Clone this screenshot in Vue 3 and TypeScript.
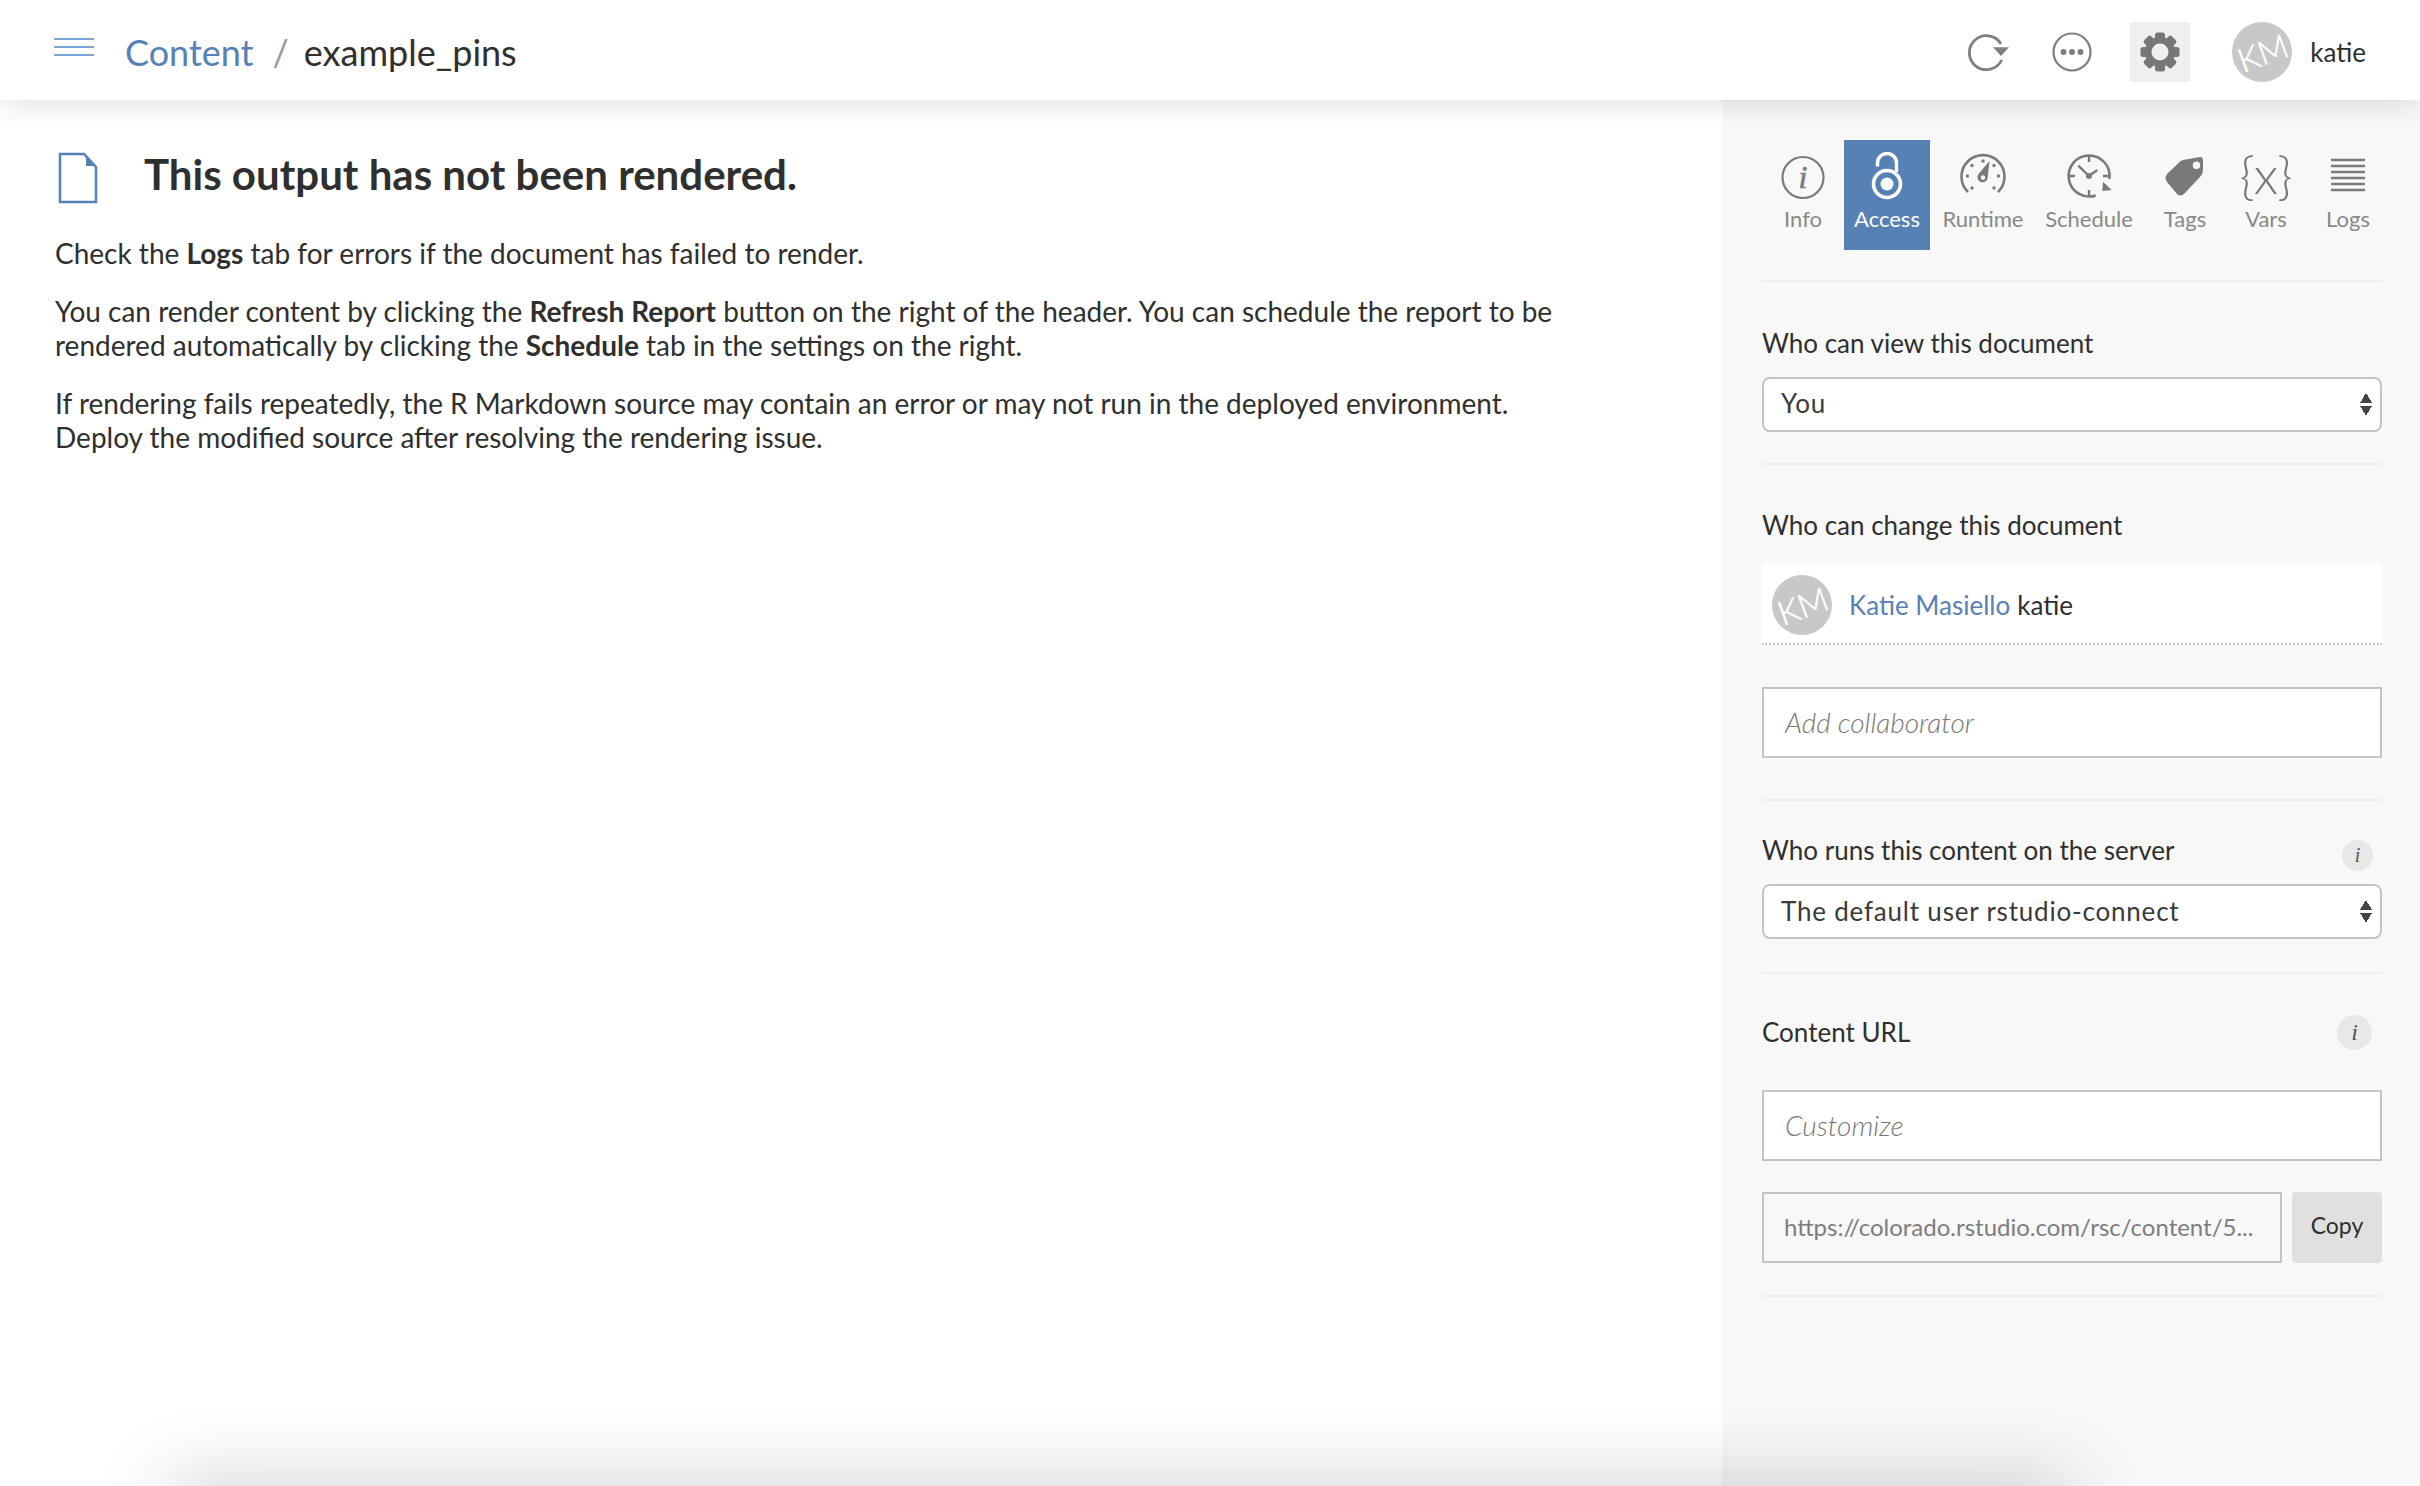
<template>
  <div class="page">
    <header class="topbar">
      <button class="menu-btn" aria-label="Menu"><span></span><span></span><span></span></button>
      <nav class="crumbs">
        <a class="crumb-link">Content</a>
        <span class="crumb-sep">/</span>
        <span class="crumb-current">example_pins</span>
      </nav>
      <div class="top-actions">
        <svg class="top-icon refresh" width="44" height="44" viewBox="0 0 44 44">
          <path d="M37.7 30A17 17 0 1 1 37 14" fill="none" stroke="#7f7f7f" stroke-width="2.8" />
          <path d="M29 17.300H45L37 26Z" fill="#7f7f7f" />
        </svg>
        <svg class="top-icon dots" width="44" height="44" viewBox="0 0 44 44">
          <circle cx="22" cy="22" r="18.500" fill="none" stroke="#7f7f7f" stroke-width="2.200" />
          <circle cx="13.500" cy="22" r="3" fill="#7f7f7f" />
          <circle cx="22" cy="22" r="3" fill="#7f7f7f" />
          <circle cx="30.500" cy="22" r="3" fill="#7f7f7f" />
        </svg>
        <div class="gear-box">
          <svg width="40" height="40" viewBox="0 0 40 40">
            <rect v-for="deg in [0, 45, 90, 135]" :key="deg" x="15" y="0.500" width="10" height="39" rx="2.500" fill="#777" :transform="`rotate(${deg} 20 20)`" />
            <circle cx="20" cy="20" r="15" fill="#777" />
            <circle cx="20" cy="20" r="8.500" fill="#efefef" />
          </svg>
        </div>
        <div class="avatar avatar-top"><span>KM</span></div>
        <span class="username">katie</span>
      </div>
    </header>

    <div class="body">
      <main class="main">
        <div class="title-row">
          <svg class="doc-icon" width="40" height="52" viewBox="0 0 40 52">
            <path d="M2 2H26L38 15V50H2Z" fill="#fff" stroke="#5781b5" stroke-width="2.500" />
            <path d="M28 3L37 14H28Z" fill="#5781b5" />
          </svg>
          <h1>This output has not been rendered.</h1>
        </div>
        <p>Check the <b>Logs</b> tab for errors if the document has failed to render.</p>
        <p>You can render content by clicking the <b>Refresh Report</b> button on the right of the header. You can schedule the report to be rendered automatically by clicking the <b>Schedule</b> tab in the settings on the right.</p>
        <p>If rendering fails repeatedly, the R Markdown source may contain an error or may not run in the deployed environment. Deploy the modified source after resolving the rendering issue.</p>
      </main>

      <aside class="sidebar">
        <div class="tabs">
          <div v-for="tab in tabs" :key="tab" class="tab" :class="{ active: tab === 'Access' }">
            <svg v-if="tab === 'Info'" width="48" height="48" viewBox="0 0 48 48">
              <circle cx="24" cy="25.500" r="20.500" fill="none" stroke="#7a7a7a" stroke-width="2.200" />
              <text x="24" y="36" class="info-i" text-anchor="middle">i</text>
            </svg>
            <svg v-else-if="tab === 'Access'" width="48" height="48" viewBox="0 0 48 48">
              <path d="M14.500 14.500V11A9.500 9.500 0 0 1 33.500 11V20" fill="none" stroke="#fff" stroke-width="3.400" />
              <circle cx="24" cy="32" r="13.500" fill="none" stroke="#fff" stroke-width="3.600" />
              <circle cx="24" cy="32" r="6.500" fill="#fff" />
            </svg>
            <svg v-else-if="tab === 'Runtime'" width="48" height="48" viewBox="0 0 48 48">
              <path d="M9 40A21.500 21.500 0 1 1 39 40" fill="none" stroke="#7a7a7a" stroke-width="2.600" />
              <g fill="#7a7a7a">
                <circle cx="24" cy="9" r="1.700" />
                <circle cx="13" cy="13.500" r="1.700" />
                <circle cx="35" cy="13.500" r="1.700" />
                <circle cx="8.500" cy="24" r="1.700" />
                <circle cx="39.500" cy="24" r="1.700" />
                <circle cx="13" cy="36" r="1.700" />
                <circle cx="35" cy="36" r="1.700" />
              </g>
              <path d="M30.500 9L28.500 27A5.200 5.200 0 1 1 19.500 22Z" fill="#7a7a7a" />
              <circle cx="24" cy="25.500" r="2.200" fill="#f8f8f8" />
            </svg>
            <svg v-else-if="tab === 'Schedule'" width="48" height="48" viewBox="0 0 48 48">
              <path d="M30.700 43.400A20.500 20.500 0 1 1 44.400 27" fill="none" stroke="#7a7a7a" stroke-width="2.600" />
              <path d="M24 4V10M24 38V44M3.500 24H10M38 24H44M13.300 13.700L24 24L32.300 18" fill="none" stroke="#7a7a7a" stroke-width="2.400" />
              <circle cx="24" cy="24" r="3" fill="#7a7a7a" />
              <path d="M38 29.700L46.700 38L37.300 39Z" fill="#7a7a7a" />
            </svg>
            <svg v-else-if="tab === 'Tags'" width="48" height="48" viewBox="0 0 48 48">
              <path fill="#7a7a7a" fill-rule="evenodd" d="M39 5L22 8Q19.500 8.500 17.500 11L6 22Q3 26 6 30L16 42Q19 45 23 42L39 25Q42 22 42 18V8Q42 5 39 5ZM35.500 9.500A3.700 3.700 0 1 1 35.500 17A3.700 3.700 0 0 1 35.500 9.500Z" />
            </svg>
            <span v-else-if="tab === 'Vars'" class="vars-icon">{x}</span>
            <svg v-else-if="tab === 'Logs'" width="48" height="48" viewBox="0 0 48 48">
              <path d="M7 8H41M7 14H41M7 20H41M7 26H41M7 32H41M7 38H41" stroke="#7a7a7a" stroke-width="2.400" />
            </svg>
            <span class="tab-label">{{ tab }}</span>
          </div>
        </div>

        <section class="section view">
          <label class="field-label">Who can view this document</label>
          <div class="select-wrap">
            <select class="select"><option>You</option></select>
            <span class="arrows"></span>
          </div>
        </section>

        <section class="section change">
          <label class="field-label">Who can change this document</label>
          <div class="collab-row">
            <div class="avatar avatar-row"><span>KM</span></div>
            <a class="collab-name">Katie Masiello</a>
            <span class="collab-user">katie</span>
          </div>
          <input class="text-input add" placeholder="Add collaborator" />
        </section>

        <section class="section runs">
          <div class="label-row">
            <label class="field-label">Who runs this content on the server</label>
            <span class="info-dot small">i</span>
          </div>
          <div class="select-wrap">
            <select class="select"><option>The default user rstudio-connect</option></select>
            <span class="arrows"></span>
          </div>
        </section>

        <section class="section url">
          <div class="label-row">
            <label class="field-label">Content URL</label>
            <span class="info-dot">i</span>
          </div>
          <input class="text-input customize" placeholder="Customize" />
          <div class="url-row">
            <input class="text-input url-input" readonly value="https://colorado.rstudio.com/rsc/content/5..." />
            <button class="copy-btn">Copy</button>
          </div>
        </section>
      </aside>
    </div>
    <div class="footer-shadow"></div>
  </div>
</template>

<script setup lang="ts">
const tabs: string[] = ['Info', 'Access', 'Runtime', 'Schedule', 'Tags', 'Vars', 'Logs'];
</script>

<style>
html, body {
  margin: 0;
  height: 100%;
  overflow: hidden;
}
</style>

<style scoped>
.page {
  position: relative;
  height: 1486px;
  overflow: hidden;
  display: flex;
  flex-direction: column;
  font-family: Lato, "Open Sans", sans-serif;
  font-size: 28px;
  color: #2f2f2f;
  background: #fff;
}

.topbar {
  position: relative;
  z-index: 2;
  height: 100px;
  box-sizing: border-box;
  padding-top: 4px;
  flex-shrink: 0;
  display: flex;
  align-items: center;
  background: #fff;
  box-shadow: 0 0 30px rgba(0, 0, 0, 0.16);
}

.menu-btn {
  width: 40px;
  margin-left: 54px;
  margin-top: -10px;
  padding: 0;
  border: 0;
  background: none;
  display: flex;
  flex-direction: column;
  gap: 6px;
}
.menu-btn span {
  height: 2px;
  background: #7ba4d6;
}

.crumbs {
  margin-left: 31px;
  font-size: 36px;
  display: flex;
  align-items: center;
}
.crumb-link { color: #5781b5; }
.crumb-sep { color: #999; margin: 0 15px 0 19px; }
.crumb-current { color: #2f2f2f; }

.top-actions {
  margin-left: auto;
  display: flex;
  align-items: center;
  padding-right: 54px;
}
.top-icon { overflow: visible; }
.refresh { margin-right: 42px; }
.dots { margin-right: 36px; }
.gear-box {
  width: 60px;
  height: 60px;
  background: #efefef;
  display: flex;
  align-items: center;
  justify-content: center;
  margin-right: 42px;
}

.avatar {
  border-radius: 50%;
  background: #c8c8c8;
  color: #fff;
  display: flex;
  align-items: center;
  justify-content: center;
  overflow: hidden;
  font-weight: 300;
  flex-shrink: 0;
}
.avatar span {
  display: block;
  transform: rotate(-20deg);
  -webkit-text-stroke: 0.5px #fff;
}
.avatar-top { width: 60px; height: 60px; font-size: 33px; }
.avatar-row { width: 60px; height: 60px; font-size: 33px; }
.username { margin-left: 18px; font-size: 26px; }

.body {
  flex: 1;
  display: flex;
  min-height: 0;
}

.main {
  flex: 1;
  padding: 46px 0 0 55px;
  min-width: 0;
}
.title-row {
  display: flex;
  align-items: center;
  height: 56px;
  margin-bottom: 34px;
}
.doc-icon { margin: 8px 46px 0 3px; flex-shrink: 0; }
h1 {
  margin: 0;
  font-size: 42px;
  font-weight: 700;
  color: #2f2f2f;
}
.main p {
  margin: 0 0 24px;
  max-width: 1520px;
  line-height: 34px;
}
.main b { font-weight: 700; }

.sidebar {
  width: 698px;
  flex-shrink: 0;
  box-sizing: border-box;
  padding: 40px 38px 0 40px;
  background: #f8f8f8;
}

.tabs {
  display: grid;
  grid-template-columns: 82px 86px 106px 106px 86px 76px 88px;
  width: 620px;
  padding-bottom: 30px;
  border-bottom: 2px solid #efefef;
}
.tab {
  display: flex;
  flex-direction: column;
  align-items: center;
  padding: 12px 0 14px;
  color: #888;
  font-size: 22px;
}
.tab svg { display: block; margin-bottom: 2px; }
.tab.active { background: #5781b5; color: #fff; }
.tab-label { line-height: 34px; white-space: nowrap; }
.info-i {
  font-family: "Liberation Serif", serif;
  font-style: italic;
  font-size: 32px;
  fill: #7a7a7a;
  stroke: #7a7a7a;
  stroke-width: 0.6px;
}
.vars-icon {
  height: 48px;
  margin-bottom: 2px;
  font-size: 52px;
  line-height: 44px;
  font-weight: 300;
  color: #777;
}

.section { border-bottom: 2px solid #efefef; }
.section.view { padding: 44px 0 31px; }
.section.change { padding: 43px 0 41px; }
.section.runs { padding: 32px 0 33px; }
.section.url { padding: 41px 0 32px; }

.field-label {
  display: block;
  line-height: 34px;
  font-size: 26px;
}
.view .field-label { margin-bottom: 17px; }
.runs .label-row { margin-bottom: 17px; }
.change .field-label { margin-bottom: 22px; }
.url .label-row { margin-bottom: 41px; }

.label-row {
  height: 34px;
  display: flex;
  align-items: center;
  justify-content: space-between;
}
.info-dot {
  width: 35px;
  height: 35px;
  margin-right: 10px;
  border-radius: 50%;
  background: #e8e8e8;
  display: flex;
  align-items: center;
  justify-content: center;
  font-family: "Liberation Serif", serif;
  font-style: italic;
  font-size: 24px;
  color: #555;
}
.info-dot.small {
  width: 31px;
  height: 31px;
  margin-right: 9px;
  margin-top: 10px;
  font-size: 20px;
}

.select-wrap { position: relative; height: 55px; }
.select {
  appearance: none;
  width: 100%;
  height: 55px;
  box-sizing: border-box;
  padding: 0 17px 3px;
  border: 2px solid #c4c4c4;
  border-radius: 8px;
  background: #fff;
  font-family: inherit;
  font-size: 26px;
  letter-spacing: 0.8px;
  color: #3a3a3a;
}
.runs .select { padding-bottom: 1px; }
.arrows {
  position: absolute;
  right: 10px;
  top: 16px;
  width: 12px;
  height: 23px;
  background:
    linear-gradient(to bottom right, transparent 50%, #444 50%) left top / 6px 10px no-repeat,
    linear-gradient(to bottom left, transparent 50%, #444 50%) right top / 6px 10px no-repeat,
    linear-gradient(to top right, transparent 50%, #444 50%) left bottom / 6px 10px no-repeat,
    linear-gradient(to top left, transparent 50%, #444 50%) right bottom / 6px 10px no-repeat;
}

.collab-row {
  height: 79px;
  box-sizing: content-box;
  display: flex;
  align-items: center;
  padding-left: 10px;
  background: #fff;
  border-bottom: 2px dotted #c4c4c4;
}
.collab-row > * { position: relative; top: 1px; }
.collab-name { margin-left: 17px; color: #5781b5; font-size: 26px; }
.collab-user { margin-left: 7px; font-size: 26px; }

.text-input {
  display: block;
  width: 100%;
  height: 71px;
  box-sizing: border-box;
  padding: 0 21px 2px;
  border: 2px solid #c4c4c4;
  border-radius: 0;
  background: #fff;
  font-family: inherit;
  font-size: 28px;
  outline: none;
}
.text-input::placeholder {
  color: #777;
  font-style: italic;
  font-weight: 300;
  opacity: 1;
}
.add { margin-top: 42px; }

.url-row {
  display: flex;
  gap: 10px;
  margin-top: 31px;
}
.url-input {
  width: 520px;
  flex-shrink: 0;
  padding: 0 18px 3px 20px;
  background: #f8f8f8;
  color: #7d7d7d;
  font-size: 24px;
}
.copy-btn {
  flex: 1;
  height: 71px;
  border: 0;
  border-radius: 4px;
  background: #e0e0e0;
  font-family: inherit;
  font-size: 23px;
  color: #2f2f2f;
  padding: 0 0 5px;
}

/* footer sits just below the fold, only its shadow shows */
.footer-shadow {
  position: absolute;
  left: 170px;
  width: 1900px;
  top: 1486px;
  height: 60px;
  box-shadow: 0 0 80px rgba(0, 0, 0, 0.22);
}
</style>
